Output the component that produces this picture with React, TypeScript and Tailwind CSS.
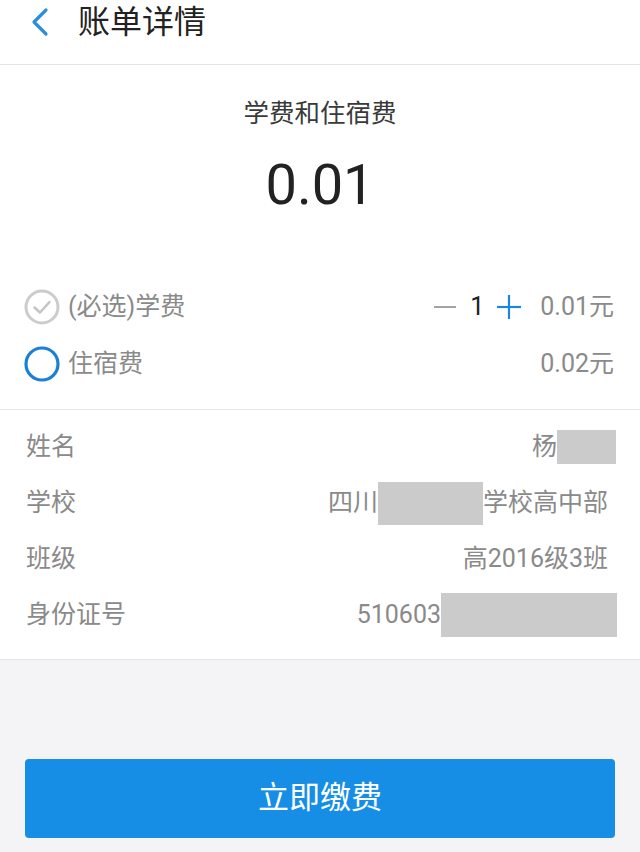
import React from "react";

const font = { fontFamily: '"Roboto", "Noto Sans CJK SC", sans-serif' };

const CheckCircle = () => (
  <svg width="36" height="36" viewBox="0 0 36 36" className="shrink-0">
    <circle cx="18" cy="18" r="16" fill="none" stroke="#cccccc" strokeWidth="3" />
    <path d="M10.5 18.5 L16 23.5 L25.5 13" fill="none" stroke="#c4c4c4" strokeWidth="2.5" strokeLinecap="round" strokeLinejoin="round" />
  </svg>
);

const EmptyCircle = () => (
  <svg width="36" height="36" viewBox="0 0 36 36" className="shrink-0">
    <circle cx="18" cy="18" r="16" fill="none" stroke="#1a80d6" strokeWidth="3.2" />
  </svg>
);

const infoRows: { label: string; value: React.ReactNode }[] = [
  {
    label: "姓名",
    value: (
      <>
        <span>杨</span>
        <span className="inline-block w-[59px] h-[34px] bg-[#cbcbcb] mr-[-8px]" />
      </>
    ),
  },
  {
    label: "学校",
    value: (
      <>
        <span>四川</span>
        <span className="inline-block w-[105px] h-[43px] bg-[#cbcbcb]" />
        <span>学校高中部</span>
      </>
    ),
  },
  { label: "班级", value: <span>高2016级3班</span> },
  {
    label: "身份证号",
    value: (
      <>
        <span>510603</span>
        <span className="inline-block w-[176px] h-[44px] bg-[#cbcbcb] mr-[-9px]" />
      </>
    ),
  },
];

export default function App() {
  return (
    <div className="min-h-screen w-full bg-[#f4f3f6] flex flex-col" style={font}>
      <header className="h-[65px] bg-white border-b border-[#e4e4e4] flex items-start">
        <div className="h-[44px] flex items-center">
          <svg width="22" height="30" viewBox="0 0 22 30" className="ml-[28px]">
            <path d="M18 3 L6 15 L18 27" fill="none" stroke="#2b8de0" strokeWidth="3.2" strokeLinecap="round" strokeLinejoin="round" />
          </svg>
          <h1 className="ml-[28px] text-[32px] leading-none text-[#222]">账单详情</h1>
        </div>
      </header>

      <section className="bg-white flex flex-col">
        <div className="pt-[30px] flex flex-col items-center">
          <p className="text-[25.5px] leading-[36px] text-[#3a3a3a]">学费和住宿费</p>
          <p className="mt-[22px] text-[56px] leading-[64px] text-[#222]">0.01</p>
        </div>

        <div className="pt-[61px] pb-[17px] pl-[24px] pr-[26px] flex flex-col border-b border-[#e8e8e8]">
          <div className="h-[57px] flex items-center">
            <CheckCircle />
            <span className="ml-[8px] text-[25px] text-[#8a8a8a]">(必选)学费</span>
            <div className="ml-auto flex items-center">
              <svg width="22" height="4" viewBox="0 0 22 4">
                <line x1="0" y1="2" x2="22" y2="2" stroke="#9a9a9a" strokeWidth="1.8" />
              </svg>
              <span className="ml-[14px] text-[25px] text-[#222]">1</span>
              <svg width="26" height="26" viewBox="0 0 26 26" className="ml-[12px]">
                <line x1="1" y1="13" x2="25" y2="13" stroke="#1a86dc" strokeWidth="2.2" />
                <line x1="13" y1="1" x2="13" y2="25" stroke="#1a86dc" strokeWidth="2.2" />
              </svg>
              <span className="ml-[18px] text-[25px] text-[#8a8a8a]">0.01元</span>
            </div>
          </div>
          <div className="h-[57px] flex items-center">
            <EmptyCircle />
            <span className="ml-[8px] text-[25px] text-[#8a8a8a]">住宿费</span>
            <span className="ml-auto text-[25px] text-[#8a8a8a]">0.02元</span>
          </div>
        </div>

        <div className="pt-[9px] pb-[16px] pl-[26px] pr-[32px] flex flex-col border-b border-[#e6e6e6]">
          {infoRows.map((row) => (
            <div key={row.label} className="h-[56px] flex items-center justify-between text-[25px] text-[#8a8a8a]">
              <span>{row.label}</span>
              <div className="flex items-center">{row.value}</div>
            </div>
          ))}
        </div>
      </section>

      <div className="pt-[99px] px-[25px]">
        <button className="w-full h-[79px] rounded-[4px] bg-[#168ee6] text-white text-[31px] flex items-center justify-center">
          立即缴费
        </button>
      </div>
    </div>
  );
}
